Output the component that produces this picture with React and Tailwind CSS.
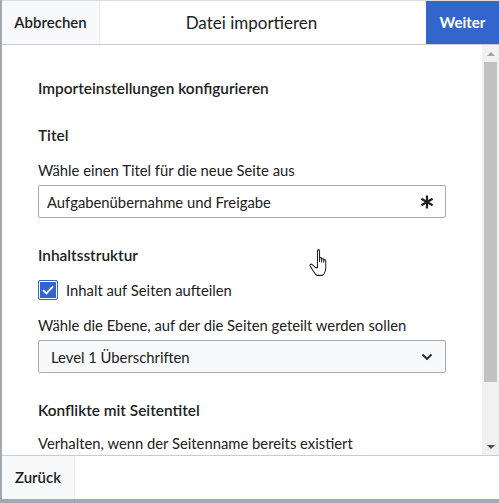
import React from "react";

function Asterisk() {
  return (
    <svg width="14" height="14" viewBox="0 0 14 14" className="text-[#202122]">
      <g stroke="currentColor" strokeWidth="2.2" strokeLinecap="butt">
        <line x1="7" y1="0.5" x2="7" y2="13.5" />
        <line x1="1.4" y1="3.75" x2="12.6" y2="10.25" />
        <line x1="1.4" y1="10.25" x2="12.6" y2="3.75" />
      </g>
    </svg>
  );
}

function Chevron() {
  return (
    <svg width="12" height="8" viewBox="0 0 12 8">
      <path d="M1.5 1.5 L6 6 L10.5 1.5" fill="none" stroke="#202122" strokeWidth="1.8" />
    </svg>
  );
}

function Hand() {
  return (
    <svg width="26" height="31" viewBox="0 0 20 24" className="absolute left-[309px] top-[248px]">
      <path
        d="M6.5 2.2c0-1 1.6-1 1.6 0v8.2V8.2c0-1 1.6-1 1.6 0v2.6-1.8c0-1 1.6-1 1.6 0v2 -1.2c0-1 1.6-1 1.6 0v5.6c0 2.6-1.4 4.8-2.6 5.8H5.8c-1.2-1.2-2-2.4-3.2-4.4L0.9 14c-0.6-1 0.6-2 1.5-1.2l2.6 2.4H6.5z"
        fill="#fff"
        stroke="#202122"
        strokeWidth="0.8"
        strokeLinejoin="round"
      />
    </svg>
  );
}

export default function App() {
  return (
    <div
      className="relative w-[499px] h-[503px] bg-[#a2a9b1] overflow-hidden text-[#202122]"
      style={{ fontFamily: "Lato, 'Noto Sans', sans-serif" }}
    >
      <div className="w-[499px] h-[499px] bg-white border-l-2 border-[#a2a9b1] flex flex-col">
        {/* Header */}
        <div className="h-[45px] shrink-0 border-t border-[#dadde3] border-b border-b-[#c8ccd1] grid grid-cols-[1fr_auto_1fr] items-stretch">
          <div className="flex">
            <div className="w-[98px] bg-[#f8f9fa] border-r border-[#eaecf0] flex items-center justify-center text-[15px] font-semibold text-[#202122]">
              Abbrechen
            </div>
          </div>
          <div className="flex items-center justify-center text-[17px] pl-[2px]">Datei importieren</div>
          <div className="flex justify-end">
            <div className="w-[73px] bg-[#3366cc] flex items-center justify-center text-[15px] font-bold text-white">
              Weiter
            </div>
          </div>
        </div>

        {/* Body */}
        <div className="flex-1 flex min-h-0">
          <div className="flex-1 px-[36px] pt-[33px] text-[14.8px] leading-[20px] flex flex-col">
            <div className="font-semibold text-[15.4px]">Importeinstellungen konfigurieren</div>
            <div className="font-semibold text-[15.4px] mt-[27px]">Titel</div>
            <div className="mt-[15px]">Wähle einen Titel für die neue Seite aus</div>
            <div className="mt-[5px] h-[33px] border border-[#a2a9b1] rounded-[2px] flex items-center justify-between pl-[8px] pr-[11px]">
              <span>Aufgabenübernahme und Freigabe</span>
              <Asterisk />
            </div>
            <div className="font-semibold text-[15.4px] mt-[27px]">Inhaltsstruktur</div>
            <div className="mt-[15px] flex items-center gap-[8px]">
              <div className="w-[20px] h-[20px] rounded-[2px] bg-[#3366cc] border border-[#3366cc] shadow-[inset_0_0_0_1px_#fff] flex items-center justify-center">
                <svg width="14" height="12" viewBox="0 0 14 12">
                  <path d="M2 6.2 L5.4 9.4 L12 2.4" fill="none" stroke="#fff" strokeWidth="1.8" />
                </svg>
              </div>
              <span>Inhalt auf Seiten aufteilen</span>
            </div>
            <div className="mt-[15px]">Wähle die Ebene, auf der die Seiten geteilt werden sollen</div>
            <div className="mt-[5px] h-[33px] border border-[#a2a9b1] rounded-[2px] bg-[#f8f9fa] flex items-center justify-between pl-[12px] pr-[12px]">
              <span>Level 1 Überschriften</span>
              <Chevron />
            </div>
            <div className="font-semibold text-[15.4px] mt-[27px]">Konflikte mit Seitentitel</div>
            <div className="mt-[13px]">Verhalten, wenn der Seitenname bereits existiert</div>
          </div>
          {/* Scrollbar */}
          <div className="w-[17px] bg-[#f1f1f1] flex flex-col items-center">
            <div className="h-[17px] w-full flex items-center justify-center">
              <div className="w-0 h-0 border-l-[4px] border-r-[4px] border-b-[4px] border-l-transparent border-r-transparent border-b-[#a3a3a3]" />
            </div>
            <div className="w-[13px] h-[320px] bg-[#c1c1c1]" />
            <div className="flex-1" />
            <div className="h-[17px] w-full flex items-center justify-center">
              <div className="w-0 h-0 border-l-[4px] border-r-[4px] border-t-[4px] border-l-transparent border-r-transparent border-t-[#505050]" />
            </div>
          </div>
        </div>

        {/* Footer */}
        <div className="h-[44px] shrink-0 border-t border-[#c8ccd1] flex">
          <div className="w-[73px] bg-[#f8f9fa] border-r border-[#eaecf0] flex items-center justify-center text-[15px] font-semibold">
            Zurück
          </div>
        </div>
      </div>
      <Hand />
    </div>
  );
}
